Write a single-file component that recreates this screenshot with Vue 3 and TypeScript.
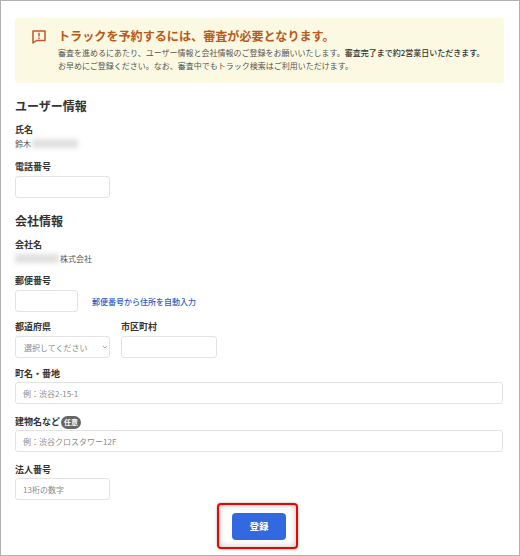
<script setup lang="ts">
const jp = "登録";
</script>

<template>
  <main class="page">
    <section class="notice">
      <svg class="notice-icon" width="14" height="14" viewBox="0 0 14 14" aria-hidden="true">
        <path d="M1 1H13V10.5H4.5L1 13Z" fill="none" stroke="#c0562a" stroke-width="1.5" stroke-linejoin="round" />
        <path d="M7 2.8V6.6M7 7.6V9" stroke="#c0562a" stroke-width="1.5" fill="none" />
      </svg>
      <div>
        <h1>トラックを予約するには、審査が必要となります。</h1>
        <p>審査を進めるにあたり、ユーザー情報と会社情報のご登録をお願いいたします。<strong>審査完了まで約2営業日いただきます。</strong></p>
        <p>お早めにご登録ください。なお、審査中でもトラック検索はご利用いただけます。</p>
      </div>
    </section>

    <h2 class="first">ユーザー情報</h2>
    <div class="label">氏名</div>
    <div class="value">鈴木<span class="blur name"></span></div>
    <div class="label tel">電話番号</div>
    <input class="input small" />

    <h2 class="company">会社情報</h2>
    <div class="label">会社名</div>
    <div class="value"><span class="blur corp"></span>株式会社</div>

    <div class="label zip-label">郵便番号</div>
    <div class="zip-row">
      <input class="input zip" />
      <a class="link">郵便番号から住所を自動入力</a>
    </div>

    <div class="pair">
      <div>
        <div class="label">都道府県</div>
        <div class="select input small">
          <span>選択してください</span>
          <svg width="6" height="4" viewBox="0 0 6 4" aria-hidden="true">
            <path d="M0.8 0.8L3 3L5.2 0.8" fill="none" stroke="#999" stroke-width="0.8" />
          </svg>
        </div>
      </div>
      <div>
        <div class="label">市区町村</div>
        <input class="input city" />
      </div>
    </div>

    <div class="label row-label address">町名・番地</div>
    <input class="input full" placeholder="例：渋谷2-15-1" />

    <div class="label row-label building">建物名など<span class="badge">任意</span></div>
    <input class="input full" placeholder="例：渋谷クロスタワー12F" />

    <div class="label row-label corp-no">法人番号</div>
    <input class="input small" placeholder="13桁の数字" />

    <div class="actions">
      <div class="highlight">
        <button type="button">{{ jp }}</button>
      </div>
    </div>
  </main>
</template>

<style>
html, body { margin: 0; background: #fff; }
</style>

<style scoped>
.page {
  box-sizing: border-box;
  width: 520px;
  height: 556px;
  padding: 17px 15px 0 14px;
  border: 1px solid #b0b0b0;
  background: #fff;
  color: #333;
  font-family: "Noto Sans CJK JP", "Noto Sans", sans-serif;
  overflow: hidden;
}
.notice {
  display: flex;
  gap: 12px;
  height: 65px;
  box-sizing: border-box;
  padding: 10px 15px 0 17px;
  background: #fcf9e2;
  border-radius: 3px;
}
.notice-icon { margin-top: 2px; flex: none; }
h1 {
  margin: 0 0 4px;
  color: #b9591c;
  font-size: 12.1px;
  line-height: 15px;
  font-weight: 700;
}
.notice p {
  margin: 0;
  color: #555;
  font-size: 8px;
  line-height: 12.5px;
  white-space: nowrap;
}
.notice strong { color: #333; font-weight: 500; }
h2 {
  margin: 0;
  font-size: 12px;
  line-height: 16px;
  font-weight: 700;
  color: #333;
}
h2.first { margin-top: 15px; }
h2.company { margin-top: 15px; }
.label {
  font-size: 9px;
  line-height: 12px;
  font-weight: 700;
  color: #333;
}
h2 + .label { margin-top: 10px; }
.value {
  display: flex;
  align-items: center;
  height: 12px;
  margin-top: 1px;
  font-size: 8px;
  color: #555;
}
.blur {
  display: inline-block;
  height: 9px;
  background: #e0e0e0;
  filter: blur(2.5px);
}
.name { width: 46px; margin-left: 1px; }
.corp { width: 44px; margin-right: 1px; }
.tel { margin-top: 12px; margin-bottom: 3px; }
.input {
  display: block;
  box-sizing: border-box;
  height: 22px;
  padding: 0 7px;
  border: 1px solid #e3e3e3;
  border-radius: 3px;
  background: #fff;
  font-family: inherit;
  font-size: 8px;
  outline: none;
}
.input::placeholder { color: #8a8a8a; }
.small { width: 95px; }
.zip-label { margin-top: 11px; }
.zip-row {
  display: flex;
  align-items: center;
  gap: 14px;
  margin-top: 3px;
}
.zip { width: 63px; }
.link {
  color: #2f5bc4;
  font-size: 8px;
  font-weight: 500;
}
.pair {
  display: flex;
  gap: 11px;
  margin-top: 9px;
}
.pair .label { margin-bottom: 3px; }
.select {
  display: flex;
  align-items: center;
  justify-content: space-between;
  color: #8a8a8a;
  padding: 0 1px 0 8px;
}
.city { width: 96px; }
.row-label { margin-bottom: 2px; }
.address { margin-top: 10px; }
.building {
  display: flex;
  align-items: center;
  height: 12px;
  margin-top: 12px;
}
.corp-no { margin-top: 12px; }
.badge {
  box-sizing: border-box;
  width: 20px;
  height: 13px;
  flex: none;
  margin-left: 1px;
  border-radius: 7px;
  background: #666;
  color: #fff;
  font-size: 7px;
  line-height: 13px;
  text-align: center;
}
.full { width: 488px; }
.actions {
  display: flex;
  justify-content: center;
  margin-top: 3px;
  padding-right: 4px;
}
.highlight {
  box-sizing: border-box;
  width: 81px;
  height: 46px;
  display: flex;
  align-items: center;
  justify-content: center;
  border: 2px solid #f00000;
  border-radius: 4px;
  box-shadow: inset 0 0 6px rgba(0, 0, 0, 0.25), 0 0 3px rgba(0, 0, 0, 0.3);
}
button {
  width: 54px;
  height: 27px;
  margin-left: 3px;
  border: 0;
  border-radius: 4px;
  background: #3268e0;
  color: #fff;
  font-family: inherit;
  font-size: 9.5px;
  font-weight: 700;
}
</style>
